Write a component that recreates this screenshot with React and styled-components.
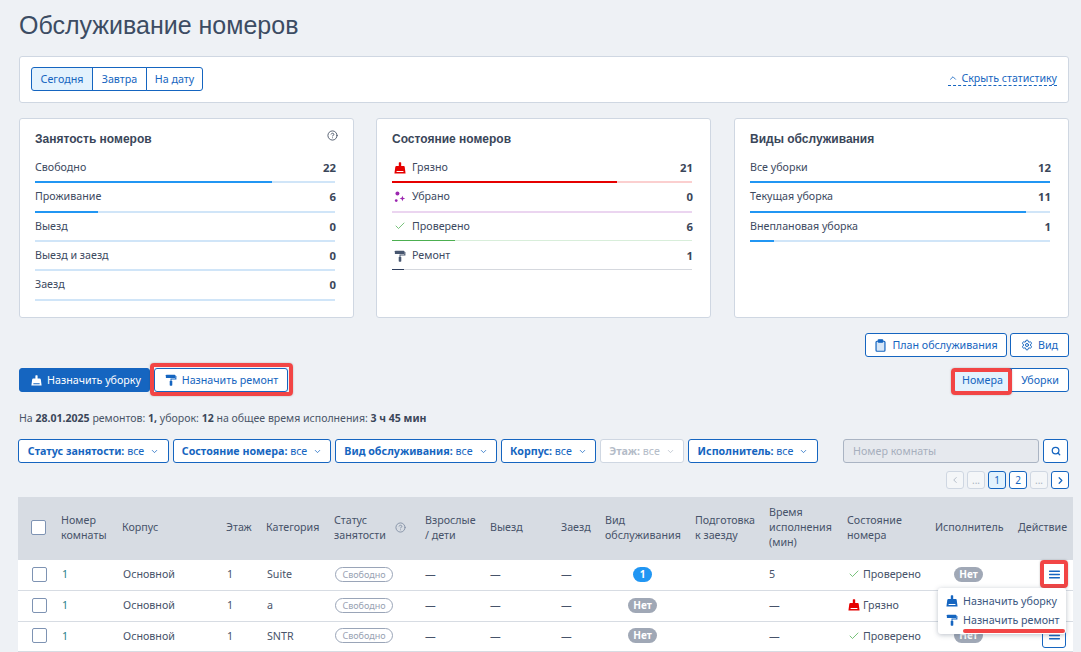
import React from "react";
import styled, { createGlobalStyle, css } from "styled-components";
import { Check, ChevronDown, ChevronLeft, ChevronRight, ChevronUp, CircleHelp, Search, Settings } from "lucide-react";

const BLUE = "#1565c0";
const TEXT = "#3d4a5f";

const GlobalStyle = createGlobalStyle`
  html, body { margin: 0; padding: 0; height: 652px; overflow: hidden; background: #eef1f5; }
  body { font-family: "Noto Sans", "Open Sans", sans-serif; font-size: 10.7px; color: ${TEXT}; }
  * { box-sizing: border-box; }
  svg { flex-shrink: 0; }
`;

// red annotation frame drawn over a control, $ring = [top, right, bottom, left]
const ringFrame = css`
  ${(p) =>
    p.$ring &&
    `position: relative;
     z-index: 1;
     &::after {
       content: "";
       position: absolute;
       top: ${p.$ring[0]}px;
       right: ${p.$ring[1]}px;
       bottom: ${p.$ring[2]}px;
       left: ${p.$ring[3]}px;
       border: 4px solid #f24545;
       border-radius: 4px;
       box-shadow: 0 0 2px rgba(60, 60, 60, 0.35);
     }`}
`;

// drawn icons
const Broom = ({ color = "currentColor", size = 14 }) => (
  <svg width={size} height={size} viewBox="0 0 14 14" fill={color}>
    <path
      fillRule="evenodd"
      d="M5.6 1c0-.4.3-.7.7-.7h1.4c.4 0 .7.3.7.7v3.6h2.8c.7 0 1.2.5 1.3 1.2l1 7.7H.5l1-7.7c.1-.7.6-1.2 1.3-1.2h2.8zM3 10.6v1.2h8v-1.2z"
    />
  </svg>
);

const Roller = ({ color = "currentColor", size = 14 }) => (
  <svg width={size} height={size} viewBox="0 0 14 14" fill={color}>
    <rect x="1" y="0.8" width="11" height="4" rx="0.8" />
    <path d="M12 2.2h1.3v4.2H7.6v1.6H6.4V5.3h5.6z" />
    <rect x="5.5" y="8" width="3" height="5.6" rx="0.8" />
  </svg>
);

const Sparkle = ({ size = 12 }) => (
  <svg width={size} height={size} viewBox="0 0 14 14" fill="#9c27b0">
    <circle cx="4" cy="3" r="2.3" />
    <circle cx="2.6" cy="11.2" r="1.6" />
    <path d="M9.8 5.4l.9 2.4 2.4.9-2.4.9-.9 2.4-.9-2.4-2.4-.9 2.4-.9z" />
  </svg>
);

const Clipboard = ({ size = 13 }) => (
  <svg width={size} height={size} viewBox="0 0 14 14" fill="none" stroke="currentColor" strokeWidth="1.3">
    <rect x="2.2" y="2.4" width="9.6" height="10.8" rx="1" fill="#d6e6f7" />
    <rect x="4.6" y="0.8" width="4.8" height="2.6" rx="0.5" fill="currentColor" />
  </svg>
);

const BarsIcon = () => (
  <svg width="11" height="9" viewBox="0 0 11 9" fill="currentColor">
    <rect width="11" height="1.5" y="0.5" rx="0.4" />
    <rect width="11" height="1.5" y="3.75" rx="0.4" />
    <rect width="11" height="1.5" y="7" rx="0.4" />
  </svg>
);

const Page = styled.div`
  width: 1081px;
  height: 652px;
  overflow: hidden;
  padding: 0 12px 0 19px;
`;

const Title = styled.h1`
  margin: 0;
  height: 56px;
  padding-top: 10px;
  font-family: "Liberation Sans", Arial, sans-serif;
  font-size: 25px;
  line-height: 31px;
  font-weight: 400;
  color: #3c4c63;
`;

const DatePanel = styled.div`
  height: 47px;
  padding: 0 11px 2px 11px;
  display: flex;
  align-items: center;
  justify-content: space-between;
  background: #fff;
  border: 1px solid #cfd7e2;
  border-radius: 3px;
`;

const Segmented = styled.div`
  display: flex;
`;

const Button = styled.button`
  height: 24px;
  padding: 0 0 0 ${(p) => p.$shift ?? 0}px;
  display: inline-flex;
  align-items: center;
  justify-content: center;
  gap: 5px;
  font: inherit;
  font-size: 10.7px;
  white-space: nowrap;
  color: ${(p) => (p.$solid ? "#fff" : BLUE)};
  background: ${(p) => (p.$solid ? BLUE : p.$active ? "#e3f2fd" : "#fff")};
  border: 1px solid ${BLUE};
  border-radius: 3px;
  ${ringFrame}
`;

const SegButton = styled(Button)`
  width: ${(p) => p.$w}px;
  border-radius: 0;
  margin-left: -1px;
  &:first-child { margin-left: 0; border-radius: 3px 0 0 3px; }
  &:last-child { border-radius: 0 3px 3px 0; }
`;

const HideStats = styled.span`
  display: inline-flex;
  align-items: center;
  gap: 3px;
  font-size: 10.6px;
  color: ${BLUE};
  border-bottom: 1px dashed ${BLUE};
  line-height: 14px;
`;

const Cards = styled.div`
  margin-top: 15px;
  display: grid;
  grid-template-columns: 357px 358px 335px;
`;

const Card = styled.section`
  position: relative;
  width: 335px;
  height: 200px;
  padding: 12px 17px 0 15px;
  background: #fff;
  border: 1px solid #cfd7e2;
  border-radius: 3px;
`;

const CardTitle = styled.h3`
  margin: 0 0 6px;
  height: 16px;
  font-family: "Liberation Sans", Arial, sans-serif;
  font-size: 12px;
  line-height: 16px;
  font-weight: 700;
  color: #3a4659;
`;

const HelpMark = styled.span`
  position: absolute;
  top: 11px;
  right: 15px;
  display: flex;
  color: #4a5568;
`;

const StatRow = styled.div`
  height: 29.35px;
  padding-top: 6px;
  display: flex;
  align-items: flex-start;
  justify-content: space-between;
  line-height: 17px;
  position: relative;
`;

const StatLabel = styled.span`
  display: flex;
  align-items: center;
  gap: 5px;
`;

const StatIcon = styled.span`
  width: 14px;
  height: 17px;
  margin-left: 1px;
  display: flex;
  align-items: center;
  justify-content: center;
`;

const StatValue = styled.b`
  font-size: 11.3px;
  color: #3a4659;
`;

const Bar = styled.div`
  position: absolute;
  left: 0;
  right: 1px;
  bottom: ${(p) => (p.$h === 1 ? 0 : -1)}px;
  height: ${(p) => p.$h ?? 2}px;
  background: ${(p) => p.$track};
`;

const BarFill = styled.div`
  height: 100%;
  background: ${(p) => p.$fill};
`;

const ActionsTop = styled.div`
  margin-top: 15px;
  display: flex;
  justify-content: flex-end;
  gap: 3px;
`;

const ActionsRow = styled.div`
  margin-top: 11px;
  display: flex;
  justify-content: space-between;
`;

const ActionGroup = styled.div`
  display: flex;
  gap: 4px;
`;

const Summary = styled.p`
  margin: 18px 0 0;
  height: 17px;
  font-size: 10.55px;
  line-height: 17px;
  color: #4a5568;
  b { color: #3a4659; }
`;

const FilterRow = styled.div`
  margin: 12px 1px 0 -1px;
  display: flex;
  gap: 4px;
`;

const Filter = styled.button`
  flex: 0 0 ${(p) => p.$w}px;
  height: 24px;
  padding: 0;
  display: flex;
  align-items: center;
  justify-content: center;
  gap: 6px;
  font: inherit;
  font-size: 10.7px;
  white-space: nowrap;
  background: #fff;
  color: ${(p) => (p.$off ? "#b4bcc8" : BLUE)};
  border: 1px solid ${(p) => (p.$off ? "#cfd7e2" : BLUE)};
  border-radius: 3px;
  b { font-weight: 700; }
`;

const RoomInput = styled.div`
  flex: 0 0 196px;
  height: 24px;
  margin-left: 21px;
  padding-left: 9px;
  display: flex;
  align-items: center;
  color: #a6afbd;
  background: #e6e9ee;
  border: 1px solid #aab4c3;
  border-radius: 3px;
`;

const SearchButton = styled(Button)`
  flex: 0 0 25px;
`;

const Pager = styled.div`
  margin-top: 8px;
  display: flex;
  justify-content: flex-end;
  gap: 3px;
`;

const PageButton = styled.span`
  width: 18px;
  height: 18px;
  display: flex;
  align-items: center;
  justify-content: center;
  font-size: 10px;
  border-radius: 3px;
  background: ${(p) => (p.$active ? "#e3f2fd" : p.$off ? "#f4f6f8" : "#fff")};
  color: ${(p) => (p.$off ? "#a9b3c1" : BLUE)};
  border: 1px solid ${(p) => (p.$off ? "#cfd7e2" : BLUE)};
`;

const columns = "43px 61px 104px 40px 68px 91px 65px 71px 44px 90px 74px 78px 88px 83px 55px";

const Table = styled.div`
  position: relative;
  width: 1055px;
  margin: 8px 0 0 -1px;
`;

const HeadRow = styled.div`
  height: 63px;
  padding-bottom: 2px;
  display: grid;
  grid-template-columns: ${columns};
  align-items: center;
  background: #d7dce3;
  line-height: 15px;
  color: #47536a;
`;

const BodyRow = styled.div`
  height: 30.8px;
  padding-bottom: 1px;
  display: grid;
  grid-template-columns: ${columns};
  align-items: center;
  background: #fff;
  border-bottom: 1px solid #d7dce3;
  color: #47536a;
`;

const HeadWithHelp = styled.span`
  display: flex;
  align-items: center;
  gap: 9px;
`;

const BodyCell = styled.span`
  padding-left: 1px;
`;

const RoomNumber = styled(BodyCell)`
  color: #2a7f8e;
`;

const CheckBox = styled.span`
  display: block;
  width: 15px;
  height: 15px;
  margin-left: ${(p) => p.$left}px;
  background: #fff;
  border: 1px solid #7e93b3;
  border-radius: 2px;
`;

const StatusPill = styled.span`
  display: inline-block;
  height: 15px;
  width: 58px;
  margin-left: 1px;
  text-align: center;
  font-size: 9px;
  line-height: 13px;
  color: #98a2b3;
  border: 1px solid #9aa5b8;
  border-radius: 8px;
`;

const CountCell = styled.span`
  width: ${(p) => p.$w}px;
  display: flex;
  justify-content: center;
`;

const Count = styled.span`
  height: 15px;
  min-width: ${(p) => (p.$blue ? 19 : 29)}px;
  padding: 0 4px;
  text-align: center;
  font-size: 10px;
  font-weight: 700;
  line-height: 15px;
  color: #fff;
  background: ${(p) => (p.$blue ? "#2196f3" : "#a0a8b6")};
  border-radius: 8px;
`;

const RoomState = styled.span`
  margin-left: 1px;
  display: flex;
  align-items: center;
  gap: 3px;
`;

const MenuButton = styled(Button)`
  width: 24px;
  margin-left: 24px;
`;

const Dropdown = styled.div`
  position: absolute;
  left: 920px;
  top: 91px;
  z-index: 3;
  width: 128px;
  height: 46px;
  padding: 3px 0 0 8px;
  background: #fff;
  border-radius: 3px;
  box-shadow: 0 1px 5px rgba(60, 75, 100, 0.35);
`;

const DropItem = styled.div`
  height: 19px;
  display: flex;
  align-items: center;
  gap: 5px;
  white-space: nowrap;
  color: #3a5680;
  svg { color: ${BLUE}; }
`;

const RedLine = styled.div`
  position: absolute;
  left: 25px;
  right: 1px;
  bottom: 1px;
  height: 4px;
  border-radius: 2px;
  background: #f24545;
`;

const occupancy = [
  ["Свободно", 22, 79],
  ["Проживание", 6, 21],
  ["Выезд", 0, 0],
  ["Выезд и заезд", 0, 0],
  ["Заезд", 0, 0],
];

const services = [
  ["Все уборки", 12, 100],
  ["Текущая уборка", 11, 92],
  ["Внеплановая уборка", 1, 8],
];

const roomStates = [
  { name: "Грязно", value: 21, pct: 75, fill: "#e60000", track: "#fbcfcf", h: 2, icon: <Broom color="#e60000" size={12} /> },
  { name: "Убрано", value: 0, pct: 0, fill: "#9c27b0", track: "#ebd5f0", h: 2, icon: <Sparkle /> },
  { name: "Проверено", value: 6, pct: 21, fill: "#4caf50", track: "#d8eeda", h: 1, icon: <Check size={12} color="#4caf50" strokeWidth={1.5} /> },
  { name: "Ремонт", value: 1, pct: 4, fill: "#2f3e5c", track: "#d5d8de", h: 1, icon: <Roller color="#47566f" size={12} /> },
];

const heads = [
  ["Номер", "комнаты"], ["Корпус"], ["Этаж"], ["Категория"], null, ["Взрослые", "/ дети"], ["Выезд"], ["Заезд"],
  ["Вид", "обслуживания"], ["Подготовка", "к заезду"], ["Время", "исполнения", "(мин)"], ["Состояние", "номера"], ["Исполнитель"], ["Действие"],
];

const rooms = [
  { category: "Suite", service: "1", time: "5", dirty: false, marked: true, assignee: "Нет" },
  { category: "a", service: "Нет", time: "—", dirty: true },
  { category: "SNTR", service: "Нет", time: "—", dirty: false, assignee: "Нет" },
];

const filters = [
  ["Статус занятости:", 151],
  ["Состояние номера:", 158],
  ["Вид обслуживания:", 162],
  ["Корпус:", 95],
  ["Этаж:", 84, true],
  ["Исполнитель:", 130],
];

const App = () => {
  return (
    <Page>
      <GlobalStyle />
      <Title>Обслуживание номеров</Title>

      <DatePanel>
        <Segmented>
          <SegButton $w={62} $active>Сегодня</SegButton>
          <SegButton $w={55}>Завтра</SegButton>
          <SegButton $w={57}>На дату</SegButton>
        </Segmented>
        <HideStats>
          <ChevronUp size={10} /> Скрыть статистику
        </HideStats>
      </DatePanel>

      <Cards>
        <Card>
          <CardTitle>Занятость номеров</CardTitle>
          <HelpMark><CircleHelp size={11} /></HelpMark>
          {occupancy.map(([name, value, pct]) => (
            <StatRow key={name}>
              <StatLabel>{name}</StatLabel>
              <StatValue>{value}</StatValue>
              <Bar $track="#d0e5f8"><BarFill $fill="#2196f3" style={{ width: `${pct}%` }} /></Bar>
            </StatRow>
          ))}
        </Card>
        <Card>
          <CardTitle>Состояние номеров</CardTitle>
          {roomStates.map((s) => (
            <StatRow key={s.name}>
              <StatLabel><StatIcon>{s.icon}</StatIcon>{s.name}</StatLabel>
              <StatValue>{s.value}</StatValue>
              <Bar $track={s.track} $h={s.h}><BarFill $fill={s.fill} style={{ width: `${s.pct}%` }} /></Bar>
            </StatRow>
          ))}
        </Card>
        <Card>
          <CardTitle>Виды обслуживания</CardTitle>
          {services.map(([name, value, pct]) => (
            <StatRow key={name}>
              <StatLabel>{name}</StatLabel>
              <StatValue>{value}</StatValue>
              <Bar $track="#d0e5f8"><BarFill $fill="#2196f3" style={{ width: `${pct}%` }} /></Bar>
            </StatRow>
          ))}
        </Card>
      </Cards>

      <ActionsTop>
        <Button style={{ width: 142 }}><Clipboard /> План обслуживания</Button>
        <Button style={{ width: 59 }}><Settings size={12} /> Вид</Button>
      </ActionsTop>

      <ActionsRow>
        <ActionGroup>
          <Button $solid $shift={3} style={{ width: 131 }}><Broom size={11} /> Назначить уборку</Button>
          <Button $shift={1} $ring={[-6, -6, -5, -5]} style={{ width: 134 }}><Roller size={12} /> Назначить ремонт</Button>
        </ActionGroup>
        <Segmented>
          <SegButton $w={59} $active $ring={[-1, -1, -4, -3]}>Номера</SegButton>
          <SegButton $w={58}>Уборки</SegButton>
        </Segmented>
      </ActionsRow>

      <Summary>
        На <b>28.01.2025</b> ремонтов: <b>1,</b> уборок: <b>12</b> на общее время исполнения: <b>3 ч 45 мин</b>
      </Summary>

      <FilterRow>
        {filters.map(([name, w, off]) => (
          <Filter key={name} $w={w} $off={off}>
            <span><b>{name}</b> все</span>
            <ChevronDown size={9} />
          </Filter>
        ))}
        <RoomInput>Номер комнаты</RoomInput>
        <SearchButton><Search size={10} strokeWidth={3} /></SearchButton>
      </FilterRow>

      <Pager>
        <PageButton $off><ChevronLeft size={10} /></PageButton>
        <PageButton $off>...</PageButton>
        <PageButton $active>1</PageButton>
        <PageButton>2</PageButton>
        <PageButton $off>...</PageButton>
        <PageButton><ChevronRight size={11} strokeWidth={2.6} /></PageButton>
      </Pager>

      <Table>
        <HeadRow>
          <CheckBox $left={13} />
          {heads.map((lines, i) =>
            lines ? (
              <span key={i}>
                {lines.map((line, j) => (
                  <React.Fragment key={line}>{j > 0 && <br />}{line}</React.Fragment>
                ))}
              </span>
            ) : (
              <HeadWithHelp key={i}>
                <span>Статус<br />занятости</span>
                <CircleHelp size={11} color="#8390a5" />
              </HeadWithHelp>
            )
          )}
        </HeadRow>
        {rooms.map((r) => (
          <BodyRow key={r.category}>
            <CheckBox $left={14} />
            <RoomNumber>1</RoomNumber>
            <BodyCell>Основной</BodyCell>
            <BodyCell>1</BodyCell>
            <BodyCell>{r.category}</BodyCell>
            <span><StatusPill>Свободно</StatusPill></span>
            <span>—</span>
            <span>—</span>
            <span>—</span>
            <CountCell $w={75}><Count $blue={r.service === "1"}>{r.service}</Count></CountCell>
            <span />
            <span>{r.time}</span>
            <RoomState>
              {r.dirty ? <Broom color="#e60000" size={12} /> : <Check size={12} color="#4caf50" strokeWidth={1.5} />}
              {r.dirty ? "Грязно" : "Проверено"}
            </RoomState>
            <CountCell $w={67}>{r.assignee && <Count>{r.assignee}</Count>}</CountCell>
            <MenuButton $ring={r.marked ? [-3, -3, -3, -3] : null}><BarsIcon /></MenuButton>
          </BodyRow>
        ))}
        <Dropdown>
          <DropItem><Broom size={12} /> Назначить уборку</DropItem>
          <DropItem><Roller size={12} /> Назначить ремонт</DropItem>
          <RedLine />
        </Dropdown>
      </Table>
    </Page>
  );
};

export default App;
